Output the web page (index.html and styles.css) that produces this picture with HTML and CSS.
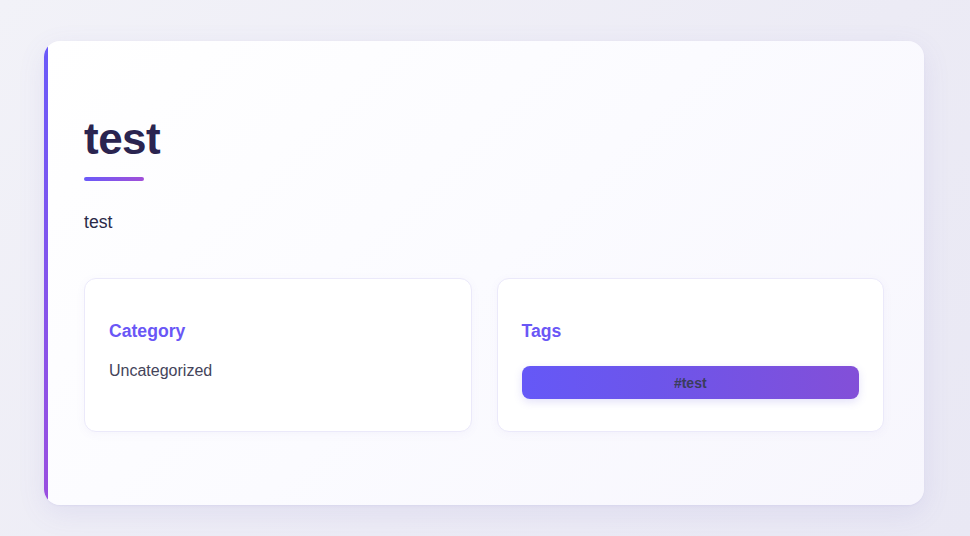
FILE: index.html
```html
<!DOCTYPE html>
<html>
<head>
<meta charset="utf-8">
<link rel="stylesheet" href="styles.css">
</head>
<body>
<main class="page">
  <article class="post">
    <h1 class="post-title">test</h1>
    <div class="title-bar"></div>
    <p class="post-body">test</p>
    <div class="meta-grid">
      <section class="meta-card">
        <h3 class="meta-label">Category</h3>
        <p class="meta-value">Uncategorized</p>
      </section>
      <section class="meta-card">
        <h3 class="meta-label">Tags</h3>
        <div class="tag-list">
          <span class="tag">#test</span>
        </div>
      </section>
    </div>
  </article>
</main>
</body>
</html>
```

FILE: styles.css
```css
* { box-sizing: border-box; }
html, body { margin: 0; padding: 0; }
body {
  font-family: "Liberation Sans", Arial, sans-serif;
  background: linear-gradient(135deg, #f2f2f8 0%, #ecebf5 60%, #e9e8f4 100%);
  width: 970px;
  height: 536px;
  overflow: hidden;
}
.page {
  padding: 41px 46px 31px 44px;
}
.post {
  position: relative;
  overflow: hidden;
  background: linear-gradient(135deg, #ffffff 0%, #fbfbff 50%, #f7f6fd 100%);
  border-radius: 16px;
  padding: 72px 40px 73px 40px;
  box-shadow: 0 8px 28px rgba(110, 100, 200, 0.10), 0 1px 2px rgba(110, 100, 200, 0.08);
}
.post::before {
  content: "";
  position: absolute;
  left: 0;
  top: 0;
  bottom: 0;
  width: 4px;
  background: linear-gradient(180deg, #6a5af9 0%, #9a4fdf 100%);
}
.post-title {
  margin: 0;
  font-size: 44px;
  line-height: 52px;
  font-weight: 700;
  letter-spacing: -0.5px;
  color: #2a2450;
}
.title-bar {
  width: 60px;
  height: 4px;
  border-radius: 2px;
  margin-top: 12px;
  background: linear-gradient(90deg, #6a5af9, #a14fd8);
}
.post-body {
  margin: 27px 0 0 0;
  font-size: 17.6px;
  line-height: 28px;
  color: #2a2a48;
}
.meta-grid {
  margin-top: 42px;
  display: grid;
  grid-template-columns: 1fr 1fr;
  gap: 25px;
}
.meta-card {
  background: #ffffff;
  border: 1px solid #ebe9fa;
  border-radius: 12px;
  padding: 24px 24px 32px 24px;
  box-shadow: 0 2px 10px rgba(110, 100, 200, 0.05);
}
.meta-label {
  margin: 17px 0 0 0;
  font-size: 17.6px;
  line-height: 22px;
  font-weight: 700;
  color: #6a57f6;
}
.meta-value {
  margin: 17px 0 0 0;
  font-size: 16px;
  line-height: 24px;
  color: #44445a;
}
.tag-list {
  margin-top: 24px;
  display: flex;
}
.tag {
  flex: 1;
  height: 33px;
  display: flex;
  align-items: center;
  justify-content: center;
  border-radius: 8px;
  background: linear-gradient(90deg, #6558f7 0%, #6d55ea 40%, #834fd8 100%);
  box-shadow: 0 3px 8px rgba(100, 90, 220, 0.18);
  font-size: 14px;
  font-weight: 700;
  color: #3a3d5c;
}
```
